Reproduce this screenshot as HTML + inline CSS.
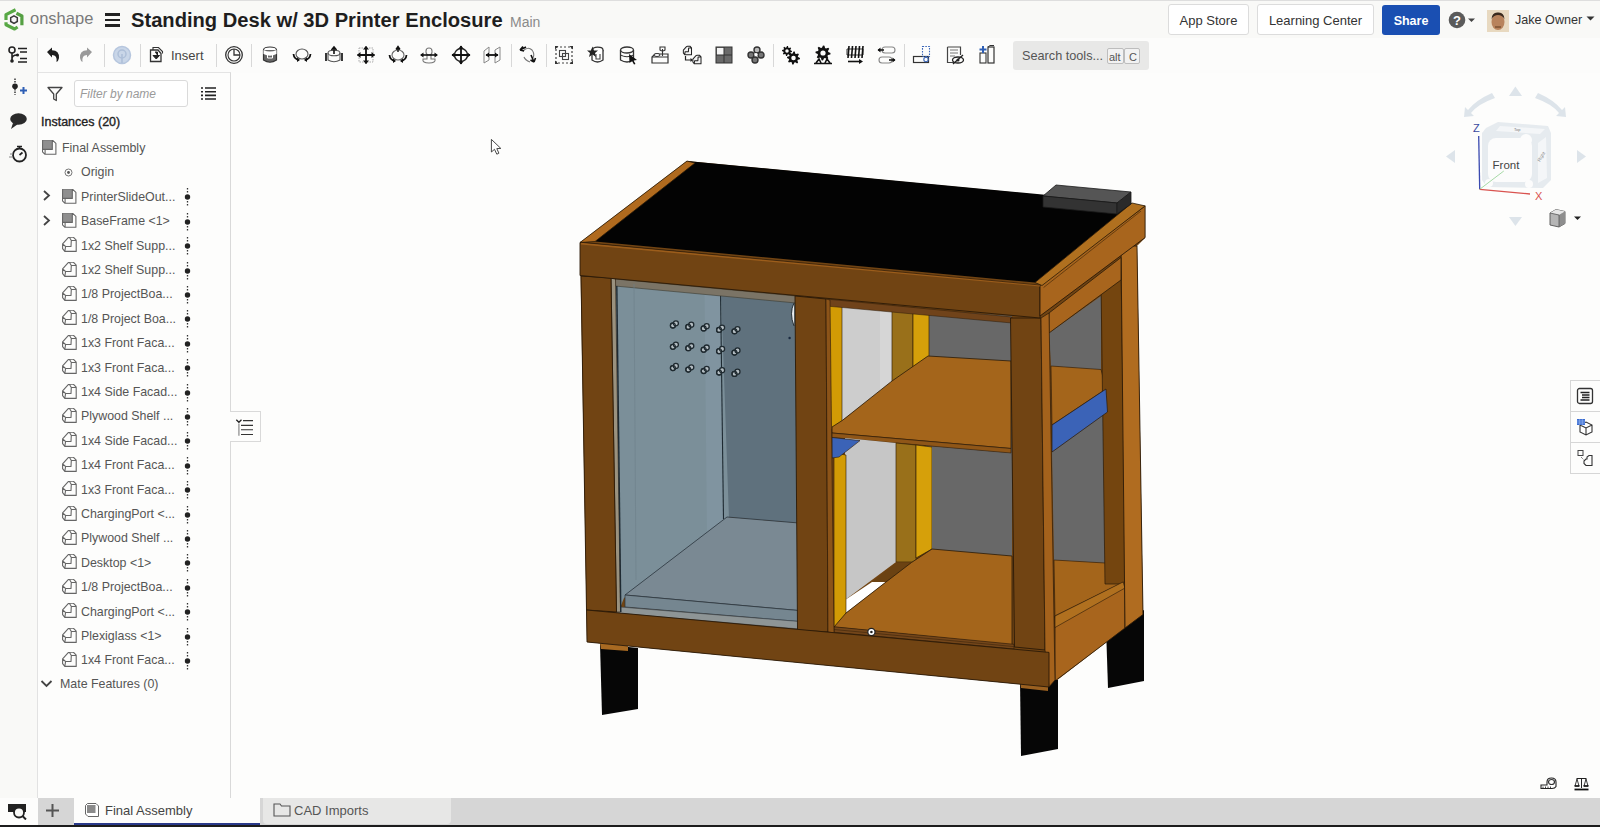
<!DOCTYPE html>
<html><head><meta charset="utf-8">
<style>
*{margin:0;padding:0;box-sizing:border-box}
html,body{width:1600px;height:827px;overflow:hidden;background:#fdfdfc;font-family:"Liberation Sans",sans-serif;color:#333}
.a{position:absolute}
.t{position:absolute;white-space:nowrap;line-height:1}
.btn{position:absolute;border:1px solid #dcdcdc;border-radius:3px;background:#fff;font-size:13px;color:#333;text-align:center}
.row{position:absolute;left:0;width:193px;height:20px;font-size:12.5px;color:#595959}
.row .tx{position:absolute;left:44px;top:3px;white-space:nowrap}
.row .ic{position:absolute;left:25px;top:2px}
.row .ch{position:absolute;left:5px;top:4px}
.row .mc{position:absolute;left:146px;top:0px}
</style></head><body>
<!-- header -->
<div class="a" style="left:0;top:0;width:1600px;height:38px;background:#f9f9f7;border-top:1px solid #dedede"></div>
<svg class="a" style="left:0;top:0" width="28" height="38" viewBox="0 0 28 38">
<path d="M6 20 V14.6 L15.6 9.8" fill="none" stroke="#58a845" stroke-width="3.2" stroke-linejoin="round"/>
<path d="M6 22.3 V24.8 L14.6 29 L17.6 27" fill="none" stroke="#58a845" stroke-width="3.2" stroke-linejoin="round"/>
<path d="M16.4 13.2 L21.9 16 V25.3" fill="none" stroke="#55a043" stroke-width="3.2" stroke-linejoin="round"/>
<path d="M14 15.8 L17.3 17.7 V21.5 L14 23.4 L10.7 21.5 V17.7Z" fill="#f6f3f6" stroke="#3a3a3a" stroke-width="1.5"/>
</svg>
<div class="t" style="left:30px;top:10px;font-size:16.5px;color:#7a7a7a">onshape</div>
<div class="a" style="left:105px;top:13px;width:15px;height:2.5px;background:#222"></div>
<div class="a" style="left:105px;top:18.5px;width:15px;height:2.5px;background:#222"></div>
<div class="a" style="left:105px;top:24px;width:15px;height:2.5px;background:#222"></div>
<div class="t" style="left:131px;top:10px;font-size:20.15px;font-weight:bold;color:#1e1e1e">Standing Desk w/ 3D Printer Enclosure</div>
<div class="t" style="left:510px;top:15px;font-size:14px;color:#8a8a8a">Main</div>
<div class="btn" style="left:1168px;top:4px;width:81px;height:31px;padding-top:8px">App Store</div>
<div class="btn" style="left:1257px;top:4px;width:117px;height:31px;padding-top:8px">Learning Center</div>
<div class="a" style="left:1382px;top:5px;width:58px;height:30px;background:#1a4fb2;border-radius:3px;color:#fff;font-weight:bold;font-size:12.5px;text-align:center;padding-top:9px">Share</div>
<svg class="a" style="left:1448px;top:11px" width="32" height="18">
<circle cx="9" cy="9" r="8.3" fill="#5b5b5b"/>
<text x="9" y="14" font-size="13" font-weight="bold" fill="#fff" text-anchor="middle" font-family="Liberation Sans">?</text>
<path d="M20 7.5 L27 7.5 L23.5 11Z" fill="#444"/>
</svg>
<svg class="a" style="left:1487px;top:10px" width="22" height="22">
<rect width="22" height="22" fill="#e8d9c0"/>
<ellipse cx="11" cy="12" rx="6.5" ry="8" fill="#b8835c"/>
<path d="M4.5 9 Q5 2 11 2.5 Q17 2 17.5 9 Q15 5 11 5 Q7 5 4.5 9Z" fill="#3a2a1e"/>
<rect x="8" y="16" width="6" height="2" fill="#8b5e3c"/>
</svg>
<div class="t" style="left:1515px;top:14px;font-size:12.6px;color:#333">Jake Owner</div>
<svg class="a" style="left:1586px;top:16px" width="9" height="6"><path d="M0.5 0.5L8.5 0.5L4.5 4.5Z" fill="#333"/></svg>

<!-- left icon strip -->
<div class="a" style="left:0;top:38px;width:38px;height:760px;background:#f9f9f7;border-right:1px solid #e2e2e2"></div>
<svg class="a" style="left:8px;top:46px" width="21" height="18" viewBox="0 0 21 18">
<circle cx="4" cy="4" r="3" fill="none" stroke="#222" stroke-width="1.6"/>
<path d="M4 7 L4 15 M4 13 Q4 9 9 9" fill="none" stroke="#222" stroke-width="1.6"/>
<circle cx="4" cy="15" r="1.8" fill="#222"/><circle cx="9.5" cy="9" r="1.6" fill="#222"/>
<path d="M10 2.5 H19 M12 6 H19 M12 12.5 H19 M10 16 H19" stroke="#222" stroke-width="1.7"/>
</svg>
<svg class="a" style="left:12px;top:78px" width="16" height="18" viewBox="0 0 16 18">
<path d="M3 0.5 V5.5 M3 11 V17" stroke="#444" stroke-width="1.6" stroke-dasharray="1.5 1.1"/>
<circle cx="3" cy="8.3" r="2.8" fill="#222"/>
<path d="M8 12.5 H15 M11.5 9 V16" stroke="#2e5fb5" stroke-width="2"/>
</svg>
<svg class="a" style="left:9px;top:112px" width="19" height="18" viewBox="0 0 19 18">
<ellipse cx="9.5" cy="7" rx="8.3" ry="5.8" fill="#2a2a2a"/>
<path d="M4 11 L2 17 L9 12Z" fill="#2a2a2a"/>
</svg>
<svg class="a" style="left:9px;top:144px" width="19" height="19" viewBox="0 0 19 19">
<circle cx="10.5" cy="11" r="6.5" fill="none" stroke="#222" stroke-width="1.8"/>
<path d="M8 2.5 H13 M10.5 2.5 V4.5 M10.5 11 L13.5 8.5" stroke="#222" stroke-width="1.7"/>
<path d="M1 10 H4 M0 13 H3" stroke="#888" stroke-width="1"/>
</svg>
<svg class="a" style="left:7px;top:802px" width="22" height="18" viewBox="0 0 22 18">
<rect x="1" y="2" width="18" height="8" fill="#222"/>
<circle cx="12" cy="10.5" r="5" fill="#f9f9f7" stroke="#222" stroke-width="1.8"/>
<path d="M15.5 14 L19 17.5" stroke="#222" stroke-width="2"/>
</svg>

<!-- toolbar -->
<div class="a" style="left:38px;top:38px;width:1562px;height:35px;background:#fcfcfb"></div>
<div class="a" style="left:104px;top:44px;width:1px;height:23px;background:#d8d8d8"></div>
<div class="a" style="left:140px;top:44px;width:1px;height:23px;background:#d8d8d8"></div>
<div class="a" style="left:216px;top:44px;width:1px;height:23px;background:#d8d8d8"></div>
<div class="a" style="left:251px;top:44px;width:1px;height:23px;background:#d8d8d8"></div>
<div class="a" style="left:511px;top:44px;width:1px;height:23px;background:#d8d8d8"></div>
<div class="a" style="left:546px;top:44px;width:1px;height:23px;background:#d8d8d8"></div>
<div class="a" style="left:773px;top:44px;width:1px;height:23px;background:#d8d8d8"></div>
<div class="a" style="left:904px;top:44px;width:1px;height:23px;background:#d8d8d8"></div>
<div class="t" style="left:171px;top:49px;font-size:13px;color:#444">Insert</div>
<div class="a" style="left:1013px;top:41px;width:136px;height:29px;background:#e8e8e7;border-radius:3px"></div>
<div class="t" style="left:1022px;top:50px;font-size:12.7px;color:#555">Search tools...</div>
<div class="a" style="left:1107px;top:48px;width:17px;height:16px;border:1px solid #bdbdbd;border-radius:2px;background:#f2f2f2;font-size:11px;color:#555;padding:2px 0 0 1px">alt</div>
<div class="a" style="left:1124px;top:48px;width:16px;height:16px;border:1px solid #bdbdbd;border-radius:2px;background:#f2f2f2;font-size:11px;color:#555;padding:2px 0 0 4px">C</div>
<!-- left panel -->
<div class="a" style="left:38px;top:72px;width:193px;height:726px;background:#fdfdfc;border-top:1px solid #e4e4e4;border-right:1px solid #d9d9d9"></div>
<svg class="a" style="left:47px;top:86px" width="16" height="16" viewBox="0 0 16 16"><path d="M1 1.5 H15 L9.3 8 V14.5 L6.7 13 V8 Z" fill="none" stroke="#444" stroke-width="1.3" stroke-linejoin="round"/></svg>
<div class="a" style="left:74px;top:80px;width:114px;height:27px;border:1px solid #dadada;border-radius:3px;background:#fff"></div>
<div class="t" style="left:80px;top:88px;font-size:12px;font-style:italic;color:#9a9a9a">Filter by name</div>
<svg class="a" style="left:201px;top:86px" width="15" height="15" viewBox="0 0 15 15"><path d="M0 2 H2 M4 2 H15 M0 5.7 H2 M4 5.7 H15 M0 9.4 H2 M4 9.4 H15 M0 13 H2 M4 13 H15" stroke="#222" stroke-width="1.6"/></svg>
<div class="t" style="left:41px;top:116px;font-size:12.5px;color:#222;-webkit-text-stroke:0.35px #222">Instances (20)</div>
<svg class="a" style="left:42px;top:139.7px" width="15" height="15" viewBox="0 0 15 15"><path d="M0.8 0.6 H10.3 V9.4 H0.8Z" fill="#8f8f8f"/><path d="M0.6 0.2 H10.5 L13.9 3.3 V14.3 H3 L0.5 11.8 Z M3.1 9.4 V14.3 M0.6 9.4 H10.3 V0.4" fill="none" stroke="#666" stroke-width="1.1" stroke-linejoin="round"/></svg>
<div class="t" style="left:62px;top:141.9px;font-size:12.4px;color:#555">Final Assembly</div>
<svg class="a" style="left:64px;top:167.9px" width="9" height="9" viewBox="0 0 9 9"><circle cx="4.5" cy="4.5" r="3.5" fill="none" stroke="#777" stroke-width="1"/><circle cx="4.5" cy="4.5" r="1.4" fill="#555"/></svg>
<div class="t" style="left:81px;top:166.3px;font-size:12.4px;color:#555">Origin</div>
<svg class="a" style="left:42px;top:190.3px" width="9" height="11" viewBox="0 0 9 11"><path d="M2 1 L7 5.5 L2 10" fill="none" stroke="#444" stroke-width="1.8"/></svg>
<svg class="a" style="left:61.5px;top:189.0px" width="15" height="15" viewBox="0 0 15 15"><path d="M0.8 0.6 H10.3 V9.4 H0.8Z" fill="#8f8f8f"/><path d="M0.6 0.2 H10.5 L13.9 3.3 V14.3 H3 L0.5 11.8 Z M3.1 9.4 V14.3 M0.6 9.4 H10.3 V0.4" fill="none" stroke="#666" stroke-width="1.1" stroke-linejoin="round"/></svg>
<div class="t" style="left:81px;top:190.7px;font-size:12.4px;color:#555">PrinterSlideOut...</div>
<svg class="a" style="left:184px;top:188.3px" width="7" height="18" viewBox="0 0 7 18"><path d="M3.5 0 V5 M3.5 13 V18" stroke="#333" stroke-width="1.3" stroke-dasharray="1.6 1.4"/><circle cx="3.5" cy="9" r="2.7" fill="#222"/></svg>
<svg class="a" style="left:42px;top:214.7px" width="9" height="11" viewBox="0 0 9 11"><path d="M2 1 L7 5.5 L2 10" fill="none" stroke="#444" stroke-width="1.8"/></svg>
<svg class="a" style="left:61.5px;top:213.4px" width="15" height="15" viewBox="0 0 15 15"><path d="M0.8 0.6 H10.3 V9.4 H0.8Z" fill="#8f8f8f"/><path d="M0.6 0.2 H10.5 L13.9 3.3 V14.3 H3 L0.5 11.8 Z M3.1 9.4 V14.3 M0.6 9.4 H10.3 V0.4" fill="none" stroke="#666" stroke-width="1.1" stroke-linejoin="round"/></svg>
<div class="t" style="left:81px;top:215.1px;font-size:12.4px;color:#555">BaseFrame &lt;1&gt;</div>
<svg class="a" style="left:184px;top:212.7px" width="7" height="18" viewBox="0 0 7 18"><path d="M3.5 0 V5 M3.5 13 V18" stroke="#333" stroke-width="1.3" stroke-dasharray="1.6 1.4"/><circle cx="3.5" cy="9" r="2.7" fill="#222"/></svg>
<svg class="a" style="left:61.5px;top:237.1px" width="15" height="15" viewBox="0 0 15 15"><path d="M0.6 6.8 L5.8 1.2 Q6.4 0.3 7.5 0.3 H11.5 L14.2 3.2 V14.4 H2.8 L0.6 11.7 Z M2.8 14.4 L3.6 9.5 H9 L9.3 3.5 H14.2 M9.3 3.5 L7.5 0.5 M3.6 9.5 L0.6 6.8" fill="none" stroke="#666" stroke-width="1.1" stroke-linejoin="round"/></svg>
<div class="t" style="left:81px;top:239.5px;font-size:12.4px;color:#555">1x2 Shelf Supp...</div>
<svg class="a" style="left:184px;top:237.1px" width="7" height="18" viewBox="0 0 7 18"><path d="M3.5 0 V5 M3.5 13 V18" stroke="#333" stroke-width="1.3" stroke-dasharray="1.6 1.4"/><circle cx="3.5" cy="9" r="2.7" fill="#222"/></svg>
<svg class="a" style="left:61.5px;top:261.5px" width="15" height="15" viewBox="0 0 15 15"><path d="M0.6 6.8 L5.8 1.2 Q6.4 0.3 7.5 0.3 H11.5 L14.2 3.2 V14.4 H2.8 L0.6 11.7 Z M2.8 14.4 L3.6 9.5 H9 L9.3 3.5 H14.2 M9.3 3.5 L7.5 0.5 M3.6 9.5 L0.6 6.8" fill="none" stroke="#666" stroke-width="1.1" stroke-linejoin="round"/></svg>
<div class="t" style="left:81px;top:263.9px;font-size:12.4px;color:#555">1x2 Shelf Supp...</div>
<svg class="a" style="left:184px;top:261.5px" width="7" height="18" viewBox="0 0 7 18"><path d="M3.5 0 V5 M3.5 13 V18" stroke="#333" stroke-width="1.3" stroke-dasharray="1.6 1.4"/><circle cx="3.5" cy="9" r="2.7" fill="#222"/></svg>
<svg class="a" style="left:61.5px;top:285.9px" width="15" height="15" viewBox="0 0 15 15"><path d="M0.6 6.8 L5.8 1.2 Q6.4 0.3 7.5 0.3 H11.5 L14.2 3.2 V14.4 H2.8 L0.6 11.7 Z M2.8 14.4 L3.6 9.5 H9 L9.3 3.5 H14.2 M9.3 3.5 L7.5 0.5 M3.6 9.5 L0.6 6.8" fill="none" stroke="#666" stroke-width="1.1" stroke-linejoin="round"/></svg>
<div class="t" style="left:81px;top:288.3px;font-size:12.4px;color:#555">1/8 ProjectBoa...</div>
<svg class="a" style="left:184px;top:285.9px" width="7" height="18" viewBox="0 0 7 18"><path d="M3.5 0 V5 M3.5 13 V18" stroke="#333" stroke-width="1.3" stroke-dasharray="1.6 1.4"/><circle cx="3.5" cy="9" r="2.7" fill="#222"/></svg>
<svg class="a" style="left:61.5px;top:310.3px" width="15" height="15" viewBox="0 0 15 15"><path d="M0.6 6.8 L5.8 1.2 Q6.4 0.3 7.5 0.3 H11.5 L14.2 3.2 V14.4 H2.8 L0.6 11.7 Z M2.8 14.4 L3.6 9.5 H9 L9.3 3.5 H14.2 M9.3 3.5 L7.5 0.5 M3.6 9.5 L0.6 6.8" fill="none" stroke="#666" stroke-width="1.1" stroke-linejoin="round"/></svg>
<div class="t" style="left:81px;top:312.7px;font-size:12.4px;color:#555">1/8 Project Boa...</div>
<svg class="a" style="left:184px;top:310.3px" width="7" height="18" viewBox="0 0 7 18"><path d="M3.5 0 V5 M3.5 13 V18" stroke="#333" stroke-width="1.3" stroke-dasharray="1.6 1.4"/><circle cx="3.5" cy="9" r="2.7" fill="#222"/></svg>
<svg class="a" style="left:61.5px;top:334.7px" width="15" height="15" viewBox="0 0 15 15"><path d="M0.6 6.8 L5.8 1.2 Q6.4 0.3 7.5 0.3 H11.5 L14.2 3.2 V14.4 H2.8 L0.6 11.7 Z M2.8 14.4 L3.6 9.5 H9 L9.3 3.5 H14.2 M9.3 3.5 L7.5 0.5 M3.6 9.5 L0.6 6.8" fill="none" stroke="#666" stroke-width="1.1" stroke-linejoin="round"/></svg>
<div class="t" style="left:81px;top:337.1px;font-size:12.4px;color:#555">1x3 Front Faca...</div>
<svg class="a" style="left:184px;top:334.7px" width="7" height="18" viewBox="0 0 7 18"><path d="M3.5 0 V5 M3.5 13 V18" stroke="#333" stroke-width="1.3" stroke-dasharray="1.6 1.4"/><circle cx="3.5" cy="9" r="2.7" fill="#222"/></svg>
<svg class="a" style="left:61.5px;top:359.1px" width="15" height="15" viewBox="0 0 15 15"><path d="M0.6 6.8 L5.8 1.2 Q6.4 0.3 7.5 0.3 H11.5 L14.2 3.2 V14.4 H2.8 L0.6 11.7 Z M2.8 14.4 L3.6 9.5 H9 L9.3 3.5 H14.2 M9.3 3.5 L7.5 0.5 M3.6 9.5 L0.6 6.8" fill="none" stroke="#666" stroke-width="1.1" stroke-linejoin="round"/></svg>
<div class="t" style="left:81px;top:361.5px;font-size:12.4px;color:#555">1x3 Front Faca...</div>
<svg class="a" style="left:184px;top:359.1px" width="7" height="18" viewBox="0 0 7 18"><path d="M3.5 0 V5 M3.5 13 V18" stroke="#333" stroke-width="1.3" stroke-dasharray="1.6 1.4"/><circle cx="3.5" cy="9" r="2.7" fill="#222"/></svg>
<svg class="a" style="left:61.5px;top:383.5px" width="15" height="15" viewBox="0 0 15 15"><path d="M0.6 6.8 L5.8 1.2 Q6.4 0.3 7.5 0.3 H11.5 L14.2 3.2 V14.4 H2.8 L0.6 11.7 Z M2.8 14.4 L3.6 9.5 H9 L9.3 3.5 H14.2 M9.3 3.5 L7.5 0.5 M3.6 9.5 L0.6 6.8" fill="none" stroke="#666" stroke-width="1.1" stroke-linejoin="round"/></svg>
<div class="t" style="left:81px;top:385.9px;font-size:12.4px;color:#555">1x4 Side Facad...</div>
<svg class="a" style="left:184px;top:383.5px" width="7" height="18" viewBox="0 0 7 18"><path d="M3.5 0 V5 M3.5 13 V18" stroke="#333" stroke-width="1.3" stroke-dasharray="1.6 1.4"/><circle cx="3.5" cy="9" r="2.7" fill="#222"/></svg>
<svg class="a" style="left:61.5px;top:407.9px" width="15" height="15" viewBox="0 0 15 15"><path d="M0.6 6.8 L5.8 1.2 Q6.4 0.3 7.5 0.3 H11.5 L14.2 3.2 V14.4 H2.8 L0.6 11.7 Z M2.8 14.4 L3.6 9.5 H9 L9.3 3.5 H14.2 M9.3 3.5 L7.5 0.5 M3.6 9.5 L0.6 6.8" fill="none" stroke="#666" stroke-width="1.1" stroke-linejoin="round"/></svg>
<div class="t" style="left:81px;top:410.3px;font-size:12.4px;color:#555">Plywood Shelf ...</div>
<svg class="a" style="left:184px;top:407.9px" width="7" height="18" viewBox="0 0 7 18"><path d="M3.5 0 V5 M3.5 13 V18" stroke="#333" stroke-width="1.3" stroke-dasharray="1.6 1.4"/><circle cx="3.5" cy="9" r="2.7" fill="#222"/></svg>
<svg class="a" style="left:61.5px;top:432.3px" width="15" height="15" viewBox="0 0 15 15"><path d="M0.6 6.8 L5.8 1.2 Q6.4 0.3 7.5 0.3 H11.5 L14.2 3.2 V14.4 H2.8 L0.6 11.7 Z M2.8 14.4 L3.6 9.5 H9 L9.3 3.5 H14.2 M9.3 3.5 L7.5 0.5 M3.6 9.5 L0.6 6.8" fill="none" stroke="#666" stroke-width="1.1" stroke-linejoin="round"/></svg>
<div class="t" style="left:81px;top:434.7px;font-size:12.4px;color:#555">1x4 Side Facad...</div>
<svg class="a" style="left:184px;top:432.3px" width="7" height="18" viewBox="0 0 7 18"><path d="M3.5 0 V5 M3.5 13 V18" stroke="#333" stroke-width="1.3" stroke-dasharray="1.6 1.4"/><circle cx="3.5" cy="9" r="2.7" fill="#222"/></svg>
<svg class="a" style="left:61.5px;top:456.7px" width="15" height="15" viewBox="0 0 15 15"><path d="M0.6 6.8 L5.8 1.2 Q6.4 0.3 7.5 0.3 H11.5 L14.2 3.2 V14.4 H2.8 L0.6 11.7 Z M2.8 14.4 L3.6 9.5 H9 L9.3 3.5 H14.2 M9.3 3.5 L7.5 0.5 M3.6 9.5 L0.6 6.8" fill="none" stroke="#666" stroke-width="1.1" stroke-linejoin="round"/></svg>
<div class="t" style="left:81px;top:459.1px;font-size:12.4px;color:#555">1x4 Front Faca...</div>
<svg class="a" style="left:184px;top:456.7px" width="7" height="18" viewBox="0 0 7 18"><path d="M3.5 0 V5 M3.5 13 V18" stroke="#333" stroke-width="1.3" stroke-dasharray="1.6 1.4"/><circle cx="3.5" cy="9" r="2.7" fill="#222"/></svg>
<svg class="a" style="left:61.5px;top:481.1px" width="15" height="15" viewBox="0 0 15 15"><path d="M0.6 6.8 L5.8 1.2 Q6.4 0.3 7.5 0.3 H11.5 L14.2 3.2 V14.4 H2.8 L0.6 11.7 Z M2.8 14.4 L3.6 9.5 H9 L9.3 3.5 H14.2 M9.3 3.5 L7.5 0.5 M3.6 9.5 L0.6 6.8" fill="none" stroke="#666" stroke-width="1.1" stroke-linejoin="round"/></svg>
<div class="t" style="left:81px;top:483.5px;font-size:12.4px;color:#555">1x3 Front Faca...</div>
<svg class="a" style="left:184px;top:481.1px" width="7" height="18" viewBox="0 0 7 18"><path d="M3.5 0 V5 M3.5 13 V18" stroke="#333" stroke-width="1.3" stroke-dasharray="1.6 1.4"/><circle cx="3.5" cy="9" r="2.7" fill="#222"/></svg>
<svg class="a" style="left:61.5px;top:505.5px" width="15" height="15" viewBox="0 0 15 15"><path d="M0.6 6.8 L5.8 1.2 Q6.4 0.3 7.5 0.3 H11.5 L14.2 3.2 V14.4 H2.8 L0.6 11.7 Z M2.8 14.4 L3.6 9.5 H9 L9.3 3.5 H14.2 M9.3 3.5 L7.5 0.5 M3.6 9.5 L0.6 6.8" fill="none" stroke="#666" stroke-width="1.1" stroke-linejoin="round"/></svg>
<div class="t" style="left:81px;top:507.9px;font-size:12.4px;color:#555">ChargingPort &lt;...</div>
<svg class="a" style="left:184px;top:505.5px" width="7" height="18" viewBox="0 0 7 18"><path d="M3.5 0 V5 M3.5 13 V18" stroke="#333" stroke-width="1.3" stroke-dasharray="1.6 1.4"/><circle cx="3.5" cy="9" r="2.7" fill="#222"/></svg>
<svg class="a" style="left:61.5px;top:529.9px" width="15" height="15" viewBox="0 0 15 15"><path d="M0.6 6.8 L5.8 1.2 Q6.4 0.3 7.5 0.3 H11.5 L14.2 3.2 V14.4 H2.8 L0.6 11.7 Z M2.8 14.4 L3.6 9.5 H9 L9.3 3.5 H14.2 M9.3 3.5 L7.5 0.5 M3.6 9.5 L0.6 6.8" fill="none" stroke="#666" stroke-width="1.1" stroke-linejoin="round"/></svg>
<div class="t" style="left:81px;top:532.3px;font-size:12.4px;color:#555">Plywood Shelf ...</div>
<svg class="a" style="left:184px;top:529.9px" width="7" height="18" viewBox="0 0 7 18"><path d="M3.5 0 V5 M3.5 13 V18" stroke="#333" stroke-width="1.3" stroke-dasharray="1.6 1.4"/><circle cx="3.5" cy="9" r="2.7" fill="#222"/></svg>
<svg class="a" style="left:61.5px;top:554.3px" width="15" height="15" viewBox="0 0 15 15"><path d="M0.6 6.8 L5.8 1.2 Q6.4 0.3 7.5 0.3 H11.5 L14.2 3.2 V14.4 H2.8 L0.6 11.7 Z M2.8 14.4 L3.6 9.5 H9 L9.3 3.5 H14.2 M9.3 3.5 L7.5 0.5 M3.6 9.5 L0.6 6.8" fill="none" stroke="#666" stroke-width="1.1" stroke-linejoin="round"/></svg>
<div class="t" style="left:81px;top:556.7px;font-size:12.4px;color:#555">Desktop &lt;1&gt;</div>
<svg class="a" style="left:184px;top:554.3px" width="7" height="18" viewBox="0 0 7 18"><path d="M3.5 0 V5 M3.5 13 V18" stroke="#333" stroke-width="1.3" stroke-dasharray="1.6 1.4"/><circle cx="3.5" cy="9" r="2.7" fill="#222"/></svg>
<svg class="a" style="left:61.5px;top:578.7px" width="15" height="15" viewBox="0 0 15 15"><path d="M0.6 6.8 L5.8 1.2 Q6.4 0.3 7.5 0.3 H11.5 L14.2 3.2 V14.4 H2.8 L0.6 11.7 Z M2.8 14.4 L3.6 9.5 H9 L9.3 3.5 H14.2 M9.3 3.5 L7.5 0.5 M3.6 9.5 L0.6 6.8" fill="none" stroke="#666" stroke-width="1.1" stroke-linejoin="round"/></svg>
<div class="t" style="left:81px;top:581.1px;font-size:12.4px;color:#555">1/8 ProjectBoa...</div>
<svg class="a" style="left:184px;top:578.7px" width="7" height="18" viewBox="0 0 7 18"><path d="M3.5 0 V5 M3.5 13 V18" stroke="#333" stroke-width="1.3" stroke-dasharray="1.6 1.4"/><circle cx="3.5" cy="9" r="2.7" fill="#222"/></svg>
<svg class="a" style="left:61.5px;top:603.1px" width="15" height="15" viewBox="0 0 15 15"><path d="M0.6 6.8 L5.8 1.2 Q6.4 0.3 7.5 0.3 H11.5 L14.2 3.2 V14.4 H2.8 L0.6 11.7 Z M2.8 14.4 L3.6 9.5 H9 L9.3 3.5 H14.2 M9.3 3.5 L7.5 0.5 M3.6 9.5 L0.6 6.8" fill="none" stroke="#666" stroke-width="1.1" stroke-linejoin="round"/></svg>
<div class="t" style="left:81px;top:605.5px;font-size:12.4px;color:#555">ChargingPort &lt;...</div>
<svg class="a" style="left:184px;top:603.1px" width="7" height="18" viewBox="0 0 7 18"><path d="M3.5 0 V5 M3.5 13 V18" stroke="#333" stroke-width="1.3" stroke-dasharray="1.6 1.4"/><circle cx="3.5" cy="9" r="2.7" fill="#222"/></svg>
<svg class="a" style="left:61.5px;top:627.5px" width="15" height="15" viewBox="0 0 15 15"><path d="M0.6 6.8 L5.8 1.2 Q6.4 0.3 7.5 0.3 H11.5 L14.2 3.2 V14.4 H2.8 L0.6 11.7 Z M2.8 14.4 L3.6 9.5 H9 L9.3 3.5 H14.2 M9.3 3.5 L7.5 0.5 M3.6 9.5 L0.6 6.8" fill="none" stroke="#666" stroke-width="1.1" stroke-linejoin="round"/></svg>
<div class="t" style="left:81px;top:629.9px;font-size:12.4px;color:#555">Plexiglass &lt;1&gt;</div>
<svg class="a" style="left:184px;top:627.5px" width="7" height="18" viewBox="0 0 7 18"><path d="M3.5 0 V5 M3.5 13 V18" stroke="#333" stroke-width="1.3" stroke-dasharray="1.6 1.4"/><circle cx="3.5" cy="9" r="2.7" fill="#222"/></svg>
<svg class="a" style="left:61.5px;top:651.9px" width="15" height="15" viewBox="0 0 15 15"><path d="M0.6 6.8 L5.8 1.2 Q6.4 0.3 7.5 0.3 H11.5 L14.2 3.2 V14.4 H2.8 L0.6 11.7 Z M2.8 14.4 L3.6 9.5 H9 L9.3 3.5 H14.2 M9.3 3.5 L7.5 0.5 M3.6 9.5 L0.6 6.8" fill="none" stroke="#666" stroke-width="1.1" stroke-linejoin="round"/></svg>
<div class="t" style="left:81px;top:654.3px;font-size:12.4px;color:#555">1x4 Front Faca...</div>
<svg class="a" style="left:184px;top:651.9px" width="7" height="18" viewBox="0 0 7 18"><path d="M3.5 0 V5 M3.5 13 V18" stroke="#333" stroke-width="1.3" stroke-dasharray="1.6 1.4"/><circle cx="3.5" cy="9" r="2.7" fill="#222"/></svg>
<svg class="a" style="left:40px;top:679.3px" width="13" height="9" viewBox="0 0 13 9"><path d="M1.5 2 L6.5 7 L11.5 2" fill="none" stroke="#444" stroke-width="1.8"/></svg>
<div class="t" style="left:60px;top:677.7px;font-size:12.4px;color:#555">Mate Features (0)</div>
<div class="a" style="left:230px;top:411px;width:31px;height:31px;background:#fdfdfc;border:1px solid #d9d9d9;border-left:none"></div>
<svg class="a" style="left:230px;top:411px" width="31" height="32" viewBox="230 411 31 32"><path d="M236.3 419.8 L238.9 422.3 L241.5 419.8" fill="none" stroke="#222" stroke-width="1.3"/><path d="M238.9 423.5 V435.8" stroke="#999" stroke-width="1.4"/><path d="M243 420.6 H253 M241 425.4 H253 M241 429.7 H253 M241 434.5 H253" stroke="#333" stroke-width="1.1"/></svg>
<div class="a" style="left:38px;top:798px;width:1562px;height:27px;background:#d6d6d6"></div>
<div class="a" style="left:0;top:825px;width:1600px;height:2px;background:#1c1c1c"></div>
<svg class="a" style="left:45px;top:803px" width="15" height="15" viewBox="0 0 15 15"><path d="M7.5 1 V14 M1 7.5 H14" stroke="#555" stroke-width="2"/></svg>
<div class="a" style="left:74px;top:798px;width:186px;height:27px;background:#fdfdfc;border-bottom:2px solid #2a3a8a"></div>
<svg class="a" style="left:84px;top:802px" width="16" height="16" viewBox="0 0 16 16"><path d="M1.5 3.5 L3.5 1.5 H12 L14.5 4 V14.5 H4 L1.5 12Z" fill="#fff" stroke="#666" stroke-width="1"/><rect x="3" y="3" width="8.5" height="8" fill="#8a8a8a"/></svg>
<div class="t" style="left:105px;top:804px;font-size:13px;color:#444">Final Assembly</div>
<div class="a" style="left:263px;top:798px;width:188px;height:26px;background:#e7e7e6;border-radius:0 0 4px 4px"></div>
<svg class="a" style="left:273px;top:803px" width="18" height="14" viewBox="0 0 18 14"><path d="M1 1 H7 L8.5 3 H17 V13 H1Z" fill="none" stroke="#555" stroke-width="1.1"/></svg>
<div class="t" style="left:294px;top:804px;font-size:13px;color:#555">CAD Imports</div>
<svg class="a" style="left:0;top:0" width="1600" height="80" viewBox="0 0 1600 80"><g transform="translate(43,45)"><path d="M4 7 L9 2.5 V5.2 Q16.5 5.5 16 13 Q15.5 16 13.5 17 Q14.5 10 9 10 V12.5 Z" fill="#1e1e1e"/></g><g transform="translate(76,45)"><path d="M16 7 L11 2.5 V5.2 Q3.5 5.5 4 13 Q4.5 16 6.5 17 Q5.5 10 11 10 V12.5 Z" fill="#9a9a9a"/></g><g transform="translate(112,45)"><circle cx="10" cy="10" r="8.5" fill="#c9d6e8" stroke="#b6c6de" stroke-width="1.5"/><circle cx="10" cy="9" r="4" fill="none" stroke="#aebfd8" stroke-width="1.5"/><path d="M10 9 V18" stroke="#aebfd8" stroke-width="1.6"/></g><g transform="translate(147,45)"><path d="M3.5 5 V16.5 H14 V8.5 L11 5 Z" fill="none" stroke="#333" stroke-width="1.3"/><path d="M6 5 V2.5 H11.5 L15.5 6.5 V8.5" fill="none" stroke="#333" stroke-width="1.1"/><path d="M6 10.5 L12.5 10.5 L9.25 14Z M8 7 H10.5 V11" fill="#222" stroke="#222" stroke-width="1"/></g><g transform="translate(224,45)"><circle cx="10" cy="10" r="8.3" fill="none" stroke="#333" stroke-width="1.3"/><circle cx="10" cy="10" r="6" fill="none" stroke="#333" stroke-width="1.1"/><path d="M10 4 V10 H16" fill="none" stroke="#333" stroke-width="1.3"/></g><g transform="translate(260,45)"><ellipse cx="10" cy="5" rx="6.5" ry="3" fill="#fff" stroke="#333" stroke-width="1.2"/><path d="M3.5 5 V15 Q10 19.5 16.5 15 V5" fill="#666" stroke="#333" stroke-width="1.2"/><path d="M3.5 5 V9 Q10 12.5 16.5 9 V5 Q10 8 3.5 5Z" fill="#fff"/><path d="M7.5 10 V13 H12.5 V10" fill="none" stroke="#fff" stroke-width="1"/></g><g transform="translate(292,45)"><ellipse cx="10" cy="9" rx="6" ry="5" fill="none" stroke="#555" stroke-width="1.1"/><path d="M1.5 9 Q2 14 7 15 M18.5 9 Q18 14 13 15" fill="none" stroke="#111" stroke-width="1.8"/><path d="M5 12.5 L8 15 L5 17Z M15 12.5 L12 15 L15 17Z" fill="#111"/></g><g transform="translate(324,45)"><ellipse cx="10" cy="8" rx="6" ry="2.8" fill="none" stroke="#555" stroke-width="1.1"/><path d="M4 8 V15 Q10 18.5 16 15 V8" fill="none" stroke="#555" stroke-width="1.1"/><path d="M2 8 V16 M18 8 V16" stroke="#222" stroke-width="1.8"/><path d="M10 9 V2.5 M7.5 5 L10 2 L12.5 5" fill="none" stroke="#111" stroke-width="1.6"/></g><g transform="translate(356,45)"><rect x="3" y="3" width="14" height="14" fill="none" stroke="#aaa" stroke-width="1" stroke-dasharray="1.5 1"/><path d="M10 1.5 V18.5 M1.5 10 H18.5" stroke="#111" stroke-width="1.8"/><path d="M7 4.5 L10 1 L13 4.5Z M7 15.5 L10 19 L13 15.5Z M4.5 7 L1 10 L4.5 13Z M15.5 7 L19 10 L15.5 13Z" fill="#111"/></g><g transform="translate(388,45)"><ellipse cx="10" cy="10" rx="6" ry="5" fill="none" stroke="#666" stroke-width="1.1"/><path d="M10 2 V7 M8 4.5 L10 1.5 L12 4.5" fill="#111" stroke="#111" stroke-width="1.4"/><path d="M1.5 10 Q2 15 7 16 M18.5 10 Q18 15 13 16" fill="none" stroke="#111" stroke-width="1.8"/><path d="M5 13.5 L8 16 L5 18Z M15 13.5 L12 16 L15 18Z" fill="#111"/></g><g transform="translate(419,45)"><rect x="7" y="3" width="6" height="7" rx="3" fill="none" stroke="#777" stroke-width="1.1"/><path d="M8 10 V14 H4 Q3 18 10 18 Q17 18 16 14 H12 V10" fill="none" stroke="#777" stroke-width="1.1"/><path d="M2 10 H18" stroke="#111" stroke-width="1.6"/><path d="M4.5 7.5 L1 10 L4.5 12.5Z M15.5 7.5 L19 10 L15.5 12.5Z" fill="#111"/></g><g transform="translate(451,45)"><circle cx="10" cy="10" r="6.5" fill="none" stroke="#222" stroke-width="1.4"/><path d="M10 1 V19 M1 10 H19" stroke="#111" stroke-width="1.8"/><path d="M7.5 3.5 L10 0.5 L12.5 3.5Z M7.5 16.5 L10 19.5 L12.5 16.5Z M3.5 7.5 L0.5 10 L3.5 12.5Z M16.5 7.5 L19.5 10 L16.5 12.5Z" fill="#111"/></g><g transform="translate(482,45)"><path d="M2 6 L7 2 V15 L2 18Z M13 5 L18 2 V15 L13 18Z" fill="none" stroke="#888" stroke-width="1"/><path d="M4 10 H16" stroke="#111" stroke-width="1.8"/><path d="M7 7.5 L3.5 10 L7 12.5Z M13 7.5 L16.5 10 L13 12.5Z" fill="#111"/></g><g transform="translate(518,45)"><path d="M5 6 Q10 1 14 5 Q17 9 15 13 M12 17 Q7 15 6 12" fill="none" stroke="#777" stroke-width="1.1"/><path d="M2 5 L8 2 M2 5 L5 1.5 M2 5 L6 6" stroke="#111" stroke-width="1.6"/><path d="M13 10 L16 17 M16 17 L12.5 15 M16 17 L17.5 13" stroke="#111" stroke-width="1.6"/></g><g transform="translate(554,45)"><path d="M2 2 H18 V18 H2Z" fill="none" stroke="#444" stroke-width="1.2" stroke-dasharray="2 2"/><path d="M1 1 L4.5 1 L1 4.5Z M19 1 L15.5 1 L19 4.5Z M1 19 L4.5 19 L1 15.5Z M19 19 L15.5 19 L19 15.5Z" fill="#333"/><rect x="5.5" y="5.5" width="6" height="6" fill="none" stroke="#444" stroke-width="1.1"/><rect x="8.5" y="8.5" width="6" height="6" fill="none" stroke="#444" stroke-width="1.1"/></g><g transform="translate(586,45)"><ellipse cx="11.5" cy="5" rx="5.5" ry="2.8" fill="none" stroke="#333" stroke-width="1.3"/><path d="M6 5 V15 Q11.5 19 17 15 V5" fill="#fff" stroke="#333" stroke-width="1.3"/><path d="M10 9 V14 H14 V9" fill="none" stroke="#444" stroke-width="1.1"/><path d="M6.5 1.5 L8 5.5 L12 5.5 L9 8 L10 12 L6.5 9.5 L3 12 L4 8 L1 5.5 L5 5.5Z" fill="#222"/></g><g transform="translate(618,45)"><ellipse cx="9" cy="5" rx="6.5" ry="3" fill="none" stroke="#333" stroke-width="1.3"/><path d="M2.5 5 V15 Q9 19 15.5 15 V5" fill="none" stroke="#333" stroke-width="1.3"/><path d="M2.5 10 Q9 13.5 15.5 10" fill="none" stroke="#333" stroke-width="1"/><path d="M11 9 L19 15 L15.5 15.5 L17.5 19 L16 19.5 L14 16 L11.5 18Z" fill="#111"/></g><g transform="translate(650,45)"><path d="M2 12 L5 9 H18 V18 H2Z" fill="none" stroke="#333" stroke-width="1.2"/><path d="M2 12 H18" stroke="#333" stroke-width="1"/><ellipse cx="7" cy="10" rx="3" ry="1.5" fill="#fff" stroke="#333" stroke-width="1"/><path d="M12.5 4 V11 M10 2 H15 V5 Q12.5 7 10 5Z" fill="none" stroke="#333" stroke-width="1.1"/></g><g transform="translate(682,45)"><g transform="translate(1,1) scale(0.6)"><path d="M0.6 6.8 L5.8 1.2 Q6.4 0.3 7.5 0.3 H11.5 L14.2 3.2 V14.4 H2.8 L0.6 11.7 Z M2.8 14.4 L3.6 9.5 H9 L9.3 3.5 H14.2" fill="#f2f2f2" stroke="#222" stroke-width="1.7" stroke-linejoin="round"/></g><g transform="translate(10.5,10) scale(0.6)"><path d="M0.6 6.8 L5.8 1.2 Q6.4 0.3 7.5 0.3 H11.5 L14.2 3.2 V14.4 H2.8 L0.6 11.7 Z M2.8 14.4 L3.6 9.5 H9 L9.3 3.5 H14.2" fill="#f2f2f2" stroke="#222" stroke-width="1.7" stroke-linejoin="round"/></g><path d="M3.5 11 V15 H9" fill="none" stroke="#222" stroke-width="1.2"/><path d="M8.5 13 L11 15 L8.5 17Z" fill="#222"/></g><g transform="translate(714,45)"><rect x="2" y="2" width="16" height="16" fill="#6a6a6a" stroke="#333" stroke-width="1"/><rect x="3" y="3" width="7" height="7" fill="#f4f4f4"/><path d="M10 2 V18 M2 10 H18" stroke="#333" stroke-width="1"/></g><g transform="translate(746,45)"><circle cx="11" cy="5" r="3" fill="#bbb" stroke="#333" stroke-width="1.4"/><circle cx="5" cy="10" r="3" fill="#777" stroke="#333" stroke-width="1.4"/><circle cx="15" cy="10" r="3" fill="#777" stroke="#333" stroke-width="1.4"/><circle cx="9" cy="15" r="3" fill="#777" stroke="#333" stroke-width="1.4"/><circle cx="10" cy="9.5" r="1.5" fill="#fff"/></g><g transform="translate(781,45)"><polygon points="11.00,6.00 10.90,6.98 9.33,7.38 8.99,8.00 9.54,9.54 8.78,10.16 7.38,9.33 6.70,9.53 6.00,11.00 5.02,10.90 4.62,9.33 4.00,8.99 2.46,9.54 1.84,8.78 2.67,7.38 2.47,6.70 1.00,6.00 1.10,5.02 2.67,4.62 3.01,4.00 2.46,2.46 3.22,1.84 4.62,2.67 5.30,2.47 6.00,1.00 6.98,1.10 7.38,2.67 8.00,3.01 9.54,2.46 10.16,3.22 9.33,4.62 9.53,5.30" fill="#111"/><circle cx="6" cy="6" r="1.75" fill="#fcfcfb"/><polygon points="19.00,13.00 18.88,14.27 16.82,14.79 16.39,15.60 17.10,17.60 16.11,18.40 14.29,17.32 13.41,17.59 12.50,19.50 11.23,19.38 10.71,17.32 9.90,16.89 7.90,17.60 7.10,16.61 8.18,14.79 7.91,13.91 6.00,13.00 6.12,11.73 8.18,11.21 8.61,10.40 7.90,8.40 8.89,7.60 10.71,8.68 11.59,8.41 12.50,6.50 13.77,6.62 14.29,8.68 15.10,9.11 17.10,8.40 17.90,9.39 16.82,11.21 17.09,12.09" fill="#111"/><circle cx="12.5" cy="13" r="2.27" fill="#fcfcfb"/></g><g transform="translate(813,45)"><polygon points="17.50,8.00 17.36,9.46 14.99,10.07 14.49,11.00 15.30,13.30 14.17,14.24 12.07,12.99 11.05,13.30 10.00,15.50 8.54,15.36 7.93,12.99 7.00,12.49 4.70,13.30 3.76,12.17 5.01,10.07 4.70,9.05 2.50,8.00 2.64,6.54 5.01,5.93 5.51,5.00 4.70,2.70 5.83,1.76 7.93,3.01 8.95,2.70 10.00,0.50 11.46,0.64 12.07,3.01 13.00,3.51 15.30,2.70 16.24,3.83 14.99,5.93 15.30,6.95" fill="#111"/><circle cx="10" cy="8" r="2.62" fill="#fcfcfb"/><path d="M1 18.5 H19 M3 18 L6 14 L8 18 M12 18 L14 14 L17 18" stroke="#111" stroke-width="1.6" fill="none"/></g><g transform="translate(845,45)"><path d="M2 4 H18 V10 H2Z" fill="none" stroke="#333" stroke-width="1"/><path d="M4 1 L3 13 M7.5 1 L6.5 13 M11 1 L10 13 M14.5 1 L13.5 13 M18 1 L17 13" stroke="#111" stroke-width="1.6"/><path d="M3 16.5 H15" stroke="#111" stroke-width="1.6"/><path d="M14 14 L18 16.5 L14 19Z" fill="#111"/></g><g transform="translate(877,45)"><rect x="5" y="2" width="13" height="6" rx="3" fill="none" stroke="#888" stroke-width="1.1"/><rect x="2" y="12" width="13" height="6" rx="3" fill="none" stroke="#888" stroke-width="1.1"/><path d="M1 5 H7 M12 15 H18" stroke="#111" stroke-width="1.6"/><path d="M3.5 2.5 L0.5 5 L3.5 7.5Z M15.5 12.5 L18.5 15 L15.5 17.5Z" fill="#111"/></g><g transform="translate(912,45)"><rect x="1.5" y="11.5" width="15" height="6" fill="none" stroke="#333" stroke-width="1.2"/><rect x="10.5" y="1.5" width="7" height="10" fill="none" stroke="#3b66b8" stroke-width="1.1" stroke-dasharray="1.6 1.2"/><circle cx="14" cy="14.5" r="2.2" fill="none" stroke="#3b66b8" stroke-width="1.1"/></g><g transform="translate(945,45)"><path d="M2.5 2 H15.5 V10 M2.5 2 V17.5 H9" fill="none" stroke="#444" stroke-width="1.2"/><path d="M5 5 H13 M5 8 H13 M5 11 H10" stroke="#777" stroke-width="1.2"/><ellipse cx="13" cy="15" rx="5.5" ry="3" fill="none" stroke="#222" stroke-width="1.3"/><circle cx="13" cy="15" r="1.5" fill="#222"/><path d="M8 19 L18 10" stroke="#222" stroke-width="1.3"/></g><g transform="translate(977,45)"><rect x="3" y="8" width="6" height="10" fill="none" stroke="#333" stroke-width="1.1"/><rect x="11" y="2" width="6" height="16" fill="none" stroke="#333" stroke-width="1.2"/><path d="M11 2 L13 0.5 H17" fill="none" stroke="#333" stroke-width="1"/><path d="M6 1 V8 M2.5 4.5 H9.5" stroke="#2e5fb5" stroke-width="2"/></g></svg>
<svg class="a" style="left:0;top:0" width="1600" height="827" viewBox="0 0 1600 827">
<polygon points="580,242.5 687,161 1134,204 1145,206 1145,238 1137,246 1143,614 1125,628 1056,681 1049,687 587,642" fill="#714413"/>
<polygon points="926,310 1012,316 1012,558 926,552" fill="#686868"/>
<polygon points="840,303 893,307 893,382 840,422" fill="#cdcdcd"/>
<polygon points="880,306 893,307 893,382 880,392" fill="#d6d6d6"/>
<polygon points="892,306 913,308 913,368 892,382" fill="#99701a" stroke="#3a2406" stroke-width="0.7" stroke-linejoin="round"/>
<polygon points="913,308 929,310 929,357 913,368" fill="#d6a00a" stroke="#3a2406" stroke-width="0.7" stroke-linejoin="round"/>
<polygon points="829,302 842,303 842,428 829,430" fill="#d29b05" stroke="#2a1a08" stroke-width="0.6" stroke-linejoin="round"/>
<polygon points="826,299 1012,317 1012,323 826,306" fill="#70431a" stroke="#2a1a08" stroke-width="0.5" stroke-linejoin="round"/>
<polygon points="832,427 842.5,420.3 892,381 928,356 1011,361 1011,448.5 832,433" fill="#a4651b" stroke="#2a1a08" stroke-width="0.8" stroke-linejoin="round"/>
<polygon points="832,433 1011,448.5 1011,453 832,437.5" fill="#8f5618" stroke="#2a1a08" stroke-width="0.6" stroke-linejoin="round"/>
<polygon points="845,438 896,443 896,562 845,600" fill="#c6c6c6"/>
<polygon points="896,443 916,445 916,562 896,562" fill="#99701a" stroke="#3a2406" stroke-width="0.7" stroke-linejoin="round"/>
<polygon points="916,445 932,447 932,549 916,558" fill="#d6a00a" stroke="#3a2406" stroke-width="0.7" stroke-linejoin="round"/>
<polygon points="932,447 1012,454 1012,556 932,549" fill="#686868"/>
<polygon points="845,600 872,582 886,582 846,613" fill="#ffffff"/>
<polygon points="872,582 896.5,562.5 911.5,562.5 885.5,582" fill="#6b4212"/>
<polygon points="834,453 846,455 846,621 834,627" fill="#d29b05" stroke="#2a1a08" stroke-width="0.6" stroke-linejoin="round"/>
<polygon points="832,437.5 860,440.6 839,457 832,458" fill="#3b63b7" stroke="#2a1a08" stroke-width="0.6" stroke-linejoin="round"/>
<polygon points="834,627 846,613 886,582 911.5,562.5 932,549 1012,556 1012,645 834,627" fill="#a4651b" stroke="#2a1a08" stroke-width="0.8" stroke-linejoin="round"/>
<polygon points="834,626.8 1014,644.3 1014,649 834,632.3" fill="#74461a" stroke="#2a1a08" stroke-width="0.6" stroke-linejoin="round"/>
<polyline points="834,629.5 1014,646.6" fill="none" stroke="#3a230a" stroke-width="0.6"/>
<circle cx="871.4" cy="632" r="3.6" fill="#fff" stroke="#222" stroke-width="1.2"/><circle cx="871.4" cy="632" r="1.3" fill="#222"/>
<polygon points="721,290 798,297 798,523 727,517 721,517" fill="#5f717d"/>
<polygon points="615,280 721,290 729,519 624,598 618,613" fill="#7b8f99"/>
<polygon points="704.5,289 720.5,291 723,530 707,540" fill="#8094a0"/>
<polyline points="720.5,290 723.5,519" fill="none" stroke="#1e2a32" stroke-width="1.1"/>
<polygon points="625,595 727,517 799,523 799.5,610.6" fill="#7a8993" stroke="#2a343c" stroke-width="0.8" stroke-linejoin="round"/>
<polygon points="625,595 799.5,610.6 799.5,621.5 625,607" fill="#758690" stroke="#2a343c" stroke-width="0.7" stroke-linejoin="round"/>
<polygon points="620,607 799.5,621.5 799.5,629 616,613" fill="#8e9596" stroke="#3a4650" stroke-width="0.6" stroke-linejoin="round"/>
<polygon points="615,279 796,296 796,303 615,286" fill="#7b7466" stroke="#3a3a30" stroke-width="0.6" stroke-linejoin="round"/>
<polygon points="611,278 615.5,279 620.5,612 616.5,612" fill="#9a927f" stroke="#2a1a08" stroke-width="0.6" stroke-linejoin="round"/>
<polyline points="616.8,286 620.8,612" fill="none" stroke="#1e2a32" stroke-width="1.4"/>
<circle cx="672.9" cy="325.5" r="2.5" fill="#b4bdc2" stroke="#1f2a30" stroke-width="1.3"/>
<circle cx="675.9" cy="323.3" r="2.5" fill="#b4bdc2" stroke="#1f2a30" stroke-width="1.3"/>
<circle cx="672.9" cy="325.5" r="2.5" fill="none" stroke="#1f2a30" stroke-width="1.1"/>
<circle cx="688.3" cy="326.9" r="2.5" fill="#b4bdc2" stroke="#1f2a30" stroke-width="1.3"/>
<circle cx="691.3" cy="324.7" r="2.5" fill="#b4bdc2" stroke="#1f2a30" stroke-width="1.3"/>
<circle cx="688.3" cy="326.9" r="2.5" fill="none" stroke="#1f2a30" stroke-width="1.1"/>
<circle cx="703.7" cy="328.4" r="2.5" fill="#b4bdc2" stroke="#1f2a30" stroke-width="1.3"/>
<circle cx="706.7" cy="326.2" r="2.5" fill="#b4bdc2" stroke="#1f2a30" stroke-width="1.3"/>
<circle cx="703.7" cy="328.4" r="2.5" fill="none" stroke="#1f2a30" stroke-width="1.1"/>
<circle cx="719.1" cy="329.9" r="2.5" fill="#b4bdc2" stroke="#1f2a30" stroke-width="1.3"/>
<circle cx="722.1" cy="327.6" r="2.5" fill="#b4bdc2" stroke="#1f2a30" stroke-width="1.3"/>
<circle cx="719.1" cy="329.9" r="2.5" fill="none" stroke="#1f2a30" stroke-width="1.1"/>
<circle cx="734.5" cy="331.3" r="2.5" fill="#b4bdc2" stroke="#1f2a30" stroke-width="1.3"/>
<circle cx="737.5" cy="329.1" r="2.5" fill="#b4bdc2" stroke="#1f2a30" stroke-width="1.3"/>
<circle cx="734.5" cy="331.3" r="2.5" fill="none" stroke="#1f2a30" stroke-width="1.1"/>
<circle cx="672.9" cy="346.8" r="2.5" fill="#b4bdc2" stroke="#1f2a30" stroke-width="1.3"/>
<circle cx="675.9" cy="344.6" r="2.5" fill="#b4bdc2" stroke="#1f2a30" stroke-width="1.3"/>
<circle cx="672.9" cy="346.8" r="2.5" fill="none" stroke="#1f2a30" stroke-width="1.1"/>
<circle cx="688.3" cy="348.2" r="2.5" fill="#b4bdc2" stroke="#1f2a30" stroke-width="1.3"/>
<circle cx="691.3" cy="346.0" r="2.5" fill="#b4bdc2" stroke="#1f2a30" stroke-width="1.3"/>
<circle cx="688.3" cy="348.2" r="2.5" fill="none" stroke="#1f2a30" stroke-width="1.1"/>
<circle cx="703.7" cy="349.7" r="2.5" fill="#b4bdc2" stroke="#1f2a30" stroke-width="1.3"/>
<circle cx="706.7" cy="347.5" r="2.5" fill="#b4bdc2" stroke="#1f2a30" stroke-width="1.3"/>
<circle cx="703.7" cy="349.7" r="2.5" fill="none" stroke="#1f2a30" stroke-width="1.1"/>
<circle cx="719.1" cy="351.2" r="2.5" fill="#b4bdc2" stroke="#1f2a30" stroke-width="1.3"/>
<circle cx="722.1" cy="348.9" r="2.5" fill="#b4bdc2" stroke="#1f2a30" stroke-width="1.3"/>
<circle cx="719.1" cy="351.2" r="2.5" fill="none" stroke="#1f2a30" stroke-width="1.1"/>
<circle cx="734.5" cy="352.6" r="2.5" fill="#b4bdc2" stroke="#1f2a30" stroke-width="1.3"/>
<circle cx="737.5" cy="350.4" r="2.5" fill="#b4bdc2" stroke="#1f2a30" stroke-width="1.3"/>
<circle cx="734.5" cy="352.6" r="2.5" fill="none" stroke="#1f2a30" stroke-width="1.1"/>
<circle cx="672.9" cy="368.1" r="2.5" fill="#b4bdc2" stroke="#1f2a30" stroke-width="1.3"/>
<circle cx="675.9" cy="365.9" r="2.5" fill="#b4bdc2" stroke="#1f2a30" stroke-width="1.3"/>
<circle cx="672.9" cy="368.1" r="2.5" fill="none" stroke="#1f2a30" stroke-width="1.1"/>
<circle cx="688.3" cy="369.6" r="2.5" fill="#b4bdc2" stroke="#1f2a30" stroke-width="1.3"/>
<circle cx="691.3" cy="367.3" r="2.5" fill="#b4bdc2" stroke="#1f2a30" stroke-width="1.3"/>
<circle cx="688.3" cy="369.6" r="2.5" fill="none" stroke="#1f2a30" stroke-width="1.1"/>
<circle cx="703.7" cy="371.0" r="2.5" fill="#b4bdc2" stroke="#1f2a30" stroke-width="1.3"/>
<circle cx="706.7" cy="368.8" r="2.5" fill="#b4bdc2" stroke="#1f2a30" stroke-width="1.3"/>
<circle cx="703.7" cy="371.0" r="2.5" fill="none" stroke="#1f2a30" stroke-width="1.1"/>
<circle cx="719.1" cy="372.5" r="2.5" fill="#b4bdc2" stroke="#1f2a30" stroke-width="1.3"/>
<circle cx="722.1" cy="370.2" r="2.5" fill="#b4bdc2" stroke="#1f2a30" stroke-width="1.3"/>
<circle cx="719.1" cy="372.5" r="2.5" fill="none" stroke="#1f2a30" stroke-width="1.1"/>
<circle cx="734.5" cy="373.9" r="2.5" fill="#b4bdc2" stroke="#1f2a30" stroke-width="1.3"/>
<circle cx="737.5" cy="371.7" r="2.5" fill="#b4bdc2" stroke="#1f2a30" stroke-width="1.3"/>
<circle cx="734.5" cy="373.9" r="2.5" fill="none" stroke="#1f2a30" stroke-width="1.1"/>
<path d="M794 303 Q789 313 794 326" fill="#e8ecef" stroke="#1a2228" stroke-width="0.9"/>
<circle cx="789.6" cy="338" r="1.2" fill="#1a2a40"/>
<polyline points="634,284 636,580" fill="none" stroke="#6d808a" stroke-width="0.6"/>
<polygon points="1049,333 1101,296 1101,370 1051,366" fill="#686868"/>
<polygon points="1051,366 1101,369.5 1106,389 1052,425" fill="#a4651b" stroke="#2a1a08" stroke-width="0.6" stroke-linejoin="round"/>
<polygon points="1052,452 1107,412 1105,563 1054,560" fill="#686868"/>
<polygon points="1054,560 1105,563 1125,583.5 1055,618" fill="#a4651b" stroke="#2a1a08" stroke-width="0.6" stroke-linejoin="round"/>
<polygon points="1101,282 1121,270 1126,584 1105,584" fill="#74450f" stroke="#2a1a08" stroke-width="0.7" stroke-linejoin="round"/>
<polygon points="1106,628 1144,610 1144,681 1108,688" fill="#060606"/>
<polygon points="1052,425 1106,389 1107.5,412 1052,452" fill="#3b63b7" stroke="#2a1a08" stroke-width="0.7" stroke-linejoin="round"/>
<polygon points="1055,616 1125,581.5 1125,628 1055,681" fill="#a8651d" stroke="#2a1a08" stroke-width="0.8" stroke-linejoin="round"/>
<polygon points="1055,616 1123,582 1125,588 1055,627.5" fill="#b0701f" stroke="#2a1a08" stroke-width="0.6" stroke-linejoin="round"/>
<polygon points="1121,246 1137,246 1143,614.5 1125,628" fill="#b06c20" stroke="#2a1a08" stroke-width="0.9" stroke-linejoin="round"/>
<polygon points="1049,313 1121,257.5 1121,280 1049,333" fill="#a8651d" stroke="#2a1a08" stroke-width="0.8" stroke-linejoin="round"/>
<polygon points="600,644 638,648 638,709 602,715" fill="#060606"/>
<polygon points="600,643 628,646 628,651 601,649" fill="#a86a22"/>
<polygon points="1020,680 1058,680 1058,749 1021,756" fill="#060606"/>
<polygon points="1020,680 1048,683 1048,691 1021,688" fill="#9a6020"/>
<polygon points="581,276 611,278 616.5,612 586.5,610" fill="#714413" stroke="#2a1a08" stroke-width="0.9" stroke-linejoin="round"/>
<polygon points="795,296 826,299 828,632 797.5,630" fill="#714413" stroke="#2a1a08" stroke-width="0.9" stroke-linejoin="round"/>
<polygon points="826,299 830,300 834,633 828,632" fill="#8c5419" stroke="#2a1a08" stroke-width="0.6" stroke-linejoin="round"/>
<polygon points="1010.5,318 1041,318 1045,650 1014.5,647" fill="#714413" stroke="#2a1a08" stroke-width="0.9" stroke-linejoin="round"/>
<polygon points="1041,318 1049,313 1055,680 1049,687 1045,650" fill="#a4621c" stroke="#2a1a08" stroke-width="0.7" stroke-linejoin="round"/>
<polygon points="586.5,610 1049,652.4 1049,687 587,642" fill="#714413" stroke="#2a1a08" stroke-width="0.9" stroke-linejoin="round"/>
<polygon points="580,242.5 1040,285.4 1040,318 580,275.5" fill="#714413" stroke="#2a1a08" stroke-width="0.9" stroke-linejoin="round"/>
<polygon points="1040,285.4 1145.1,205.9 1145.1,237.6 1040,316" fill="#a8651d" stroke="#2a1a08" stroke-width="0.9" stroke-linejoin="round"/>
<polyline points="1043.6,287.5 1141,211" fill="none" stroke="#4a2c0a" stroke-width="0.7"/>
<polygon points="687,161 1132,203 1035,282.5 595,241.5" fill="#030303"/>
<polygon points="580,242.5 687,161 695,163 595,241.5" fill="#b06a1e" stroke="#2a1a08" stroke-width="0.8" stroke-linejoin="round"/>
<polyline points="581,243.5 1040,285.5" fill="none" stroke="#9c5d1b" stroke-width="2"/>
<polyline points="580,242.2 1040,285" fill="none" stroke="#2a1a08" stroke-width="0.7"/>
<polygon points="1035,282.5 1132,203 1145.1,205.9 1042,285.5" fill="#b0701f" stroke="#2a1a08" stroke-width="0.8" stroke-linejoin="round"/>
<polygon points="1043,196 1056,185 1131,192 1117,203" fill="#555555" stroke="#1a1a1a" stroke-width="0.8" stroke-linejoin="round"/>
<polygon points="1043,196 1117,203 1117,214 1043,207" fill="#333333" stroke="#1a1a1a" stroke-width="0.8" stroke-linejoin="round"/>
<polygon points="1117,203 1131,192 1131,204 1117,214" fill="#2a2a2a" stroke="#1a1a1a" stroke-width="0.8" stroke-linejoin="round"/>
</svg>
<!-- cursor -->
<svg class="a" style="left:488px;top:137px" width="16" height="20" viewBox="488 137 16 20">
<path d="M491.4 139.4 L491.4 152 L494.5 149.3 L496.8 154.2 L498.9 153.2 L496.8 148.6 L500.8 148.4 Z" fill="#fff" stroke="#333" stroke-width="0.9" stroke-linejoin="round"/>
</svg>
<!-- view cube -->
<svg class="a" style="left:1440px;top:80px" width="160" height="160" viewBox="1440 80 160 160">
<g fill="#dde4ea">
<path d="M1509 96 L1515.4 86.5 L1522 96Z"/>
<path d="M1509 217 L1515.4 226 L1522 217Z"/>
<path d="M1455 150 L1446 156.4 L1455 163Z"/>
<path d="M1577 150 L1586 156.4 L1577 163Z"/>
<path d="M1492 93 L1495 98 Q1478 104 1471 113 L1474 116 L1464 117 L1465 107 L1468 110 Q1476 100 1492 93Z"/>
<path d="M1538 93 L1535 98 Q1552 104 1559 113 L1556 116 L1566 117 L1565 107 L1562 110 Q1554 100 1538 93Z"/>
</g>
<path d="M1486 128 L1498 122 L1548 126 L1551 133 L1551 180 L1543 188 L1487 187 L1482 180 L1482 133Z" fill="#e6ebef"/>
<rect x="1488" y="138" width="44" height="44" rx="8" fill="#fcfcfc"/>
<circle cx="1526" cy="140" r="6" fill="#fcfcfc"/>
<circle cx="1489" cy="183" r="4" fill="#fcfcfc"/>
<circle cx="1529" cy="184" r="4" fill="#fcfcfc"/>
<path d="M1500 126 L1545 129 L1540 134 L1496 131Z" fill="#f4f6f8"/>
<path d="M1538 143 L1546 137 L1547 178 L1538 183Z" fill="#f4f6f8"/>
<text x="1506" y="169" font-family="Liberation Sans" font-size="11.5" fill="#444" text-anchor="middle">Front</text>
<text x="1514" y="131" font-family="Liberation Sans" font-size="4" fill="#777">Top</text>
<text x="1540" y="162" font-family="Liberation Sans" font-size="4.5" fill="#888" transform="rotate(-60 1540 162)">Right</text>
<path d="M1478.7 136 L1479.7 189.3" stroke="#3a4ab0" stroke-width="1.3"/>
<path d="M1479.7 189.3 L1530 194" stroke="#d9534f" stroke-width="1.3"/>
<path d="M1479.7 189.3 L1503.8 171" stroke="#8fcf8f" stroke-width="0.8"/>
<text x="1473" y="132" font-family="Liberation Sans" font-size="11" fill="#3a4aa0">Z</text>
<text x="1535" y="200" font-family="Liberation Sans" font-size="11" fill="#d9534f">X</text>
</svg>
<svg class="a" style="left:1548px;top:208px" width="34" height="20" viewBox="0 0 34 20">
<path d="M2 5 L8 1.5 L17 3.5 L17 15.5 L11 19 L2 17Z" fill="#b5b5b5" stroke="#555" stroke-width="0.9"/>
<path d="M2 5 L8 1.5 L17 3.5 L11 7Z" fill="#e6e6e6"/>
<path d="M11 7 L17 3.5 L17 15.5 L11 19Z" fill="#8e8e8e"/>
<path d="M2 5 L11 7 L11 19" fill="none" stroke="#555" stroke-width="0.8"/>
<path d="M26 8.5 L33 8.5 L29.5 12Z" fill="#222"/>
</svg>
<!-- right mini toolbar -->
<div class="a" style="left:1570px;top:380px;width:32px;height:94px;background:#fdfdfc;border:1px solid #d6d6d6"></div>
<div class="a" style="left:1570px;top:411px;width:30px;height:1px;background:#d6d6d6"></div>
<div class="a" style="left:1570px;top:442px;width:30px;height:1px;background:#d6d6d6"></div>
<svg class="a" style="left:1576px;top:387px" width="18" height="18" viewBox="0 0 18 18"><rect x="1.5" y="1.5" width="15" height="15" rx="2" fill="none" stroke="#333" stroke-width="1.3"/><path d="M4.5 5.5 H13.5 M6 8 H13.5 M6 10.5 H13.5 M4.5 13 H13.5" stroke="#222" stroke-width="1.3"/></svg>
<svg class="a" style="left:1576px;top:418px" width="18" height="18" viewBox="0 0 18 18"><path d="M4 7 L10 4 L16 7 L16 14 L10 17 L4 14Z M4 7 L10 10 L16 7 M10 10 V17" fill="#fff" stroke="#333" stroke-width="1.1"/><rect x="1" y="1" width="8" height="6" fill="#3a6bd0"/><path d="M1 3 H9 M1 5 H9 M3.7 1 V7 M6.3 1 V7" stroke="#9fbef0" stroke-width="0.6"/></svg>
<svg class="a" style="left:1576px;top:449px" width="18" height="18" viewBox="0 0 18 18"><rect x="2" y="1.5" width="5" height="5" fill="none" stroke="#444" stroke-width="1"/><path d="M5 8 L8 11" stroke="#555" stroke-width="1" stroke-dasharray="1 1"/><path d="M8 12 L10 10 H11 V8 L13 6.5 H16 V16.5 H10 L8 14.5Z" fill="none" stroke="#333" stroke-width="1.1"/></svg>
<!-- bottom right icons -->
<svg class="a" style="left:1540px;top:776px" width="18" height="16" viewBox="0 0 18 16"><path d="M1 9 H7 V6 Q7 2 11.5 2 Q16 2 16 6 V10.5 Q15 12.5 12 12.5 H1Z" fill="#fff" stroke="#222" stroke-width="1.1"/><ellipse cx="11.5" cy="6" rx="3" ry="2.5" fill="none" stroke="#333" stroke-width="1.2"/><path d="M3 12 V10.5 M5.5 12 V10.5 M8 12 V10.5 M10.5 12 V10.5" stroke="#333" stroke-width="0.9"/></svg>
<svg class="a" style="left:1574px;top:776px" width="15" height="16" viewBox="0 0 15 16"><path d="M2.5 2.5 H12.5 M7.5 2.5 V12" stroke="#222" stroke-width="1"/><path d="M3 3 L1 10 H5Z M12 3 L10 10 H14Z" fill="none" stroke="#222" stroke-width="0.9"/><path d="M0.5 10 H5.5 M9.5 10 H14.5" stroke="#111" stroke-width="1.6"/><path d="M0.5 13.5 H14.5" stroke="#111" stroke-width="1.8"/></svg>
</body></html>
